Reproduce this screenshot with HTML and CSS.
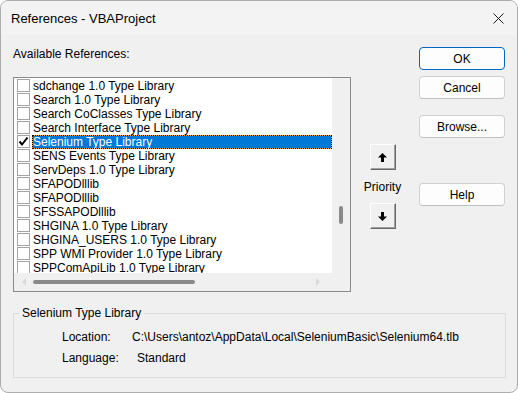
FILE: index.html
```html
<!DOCTYPE html>
<html lang="en">
<head>
  <meta charset="UTF-8">
  <title>References - VBAProject</title>
  <link rel="stylesheet" href="styles.css">
</head>
<body>
  <div class="window">
    <div class="titlebar">
      <span class="title">References - VBAProject</span>
      <svg class="close" width="11" height="11" viewBox="0 0 11 11">
        <path d="M0.5 0.5 L10.5 10.5 M10.5 0.5 L0.5 10.5" stroke="#1a1a1a" stroke-width="1" fill="none"/>
      </svg>
    </div>

    <div class="content">
      <div class="main">
        <div class="refs">
          <div class="label">Available References:</div>
          <div class="listbox">
            <div class="items">
              <div class="item"><span class="check"></span><span class="name">sdchange 1.0 Type Library</span></div>
              <div class="item"><span class="check"></span><span class="name">Search 1.0 Type Library</span></div>
              <div class="item"><span class="check"></span><span class="name">Search CoClasses Type Library</span></div>
              <div class="item"><span class="check"></span><span class="name">Search Interface Type Library</span></div>
              <div class="item selected">
                <span class="check">
                  <svg width="11" height="11" viewBox="0 0 11 11"><path d="M1.5 5.5 L4 8.5 L9.5 1.5" stroke="#000" stroke-width="2" fill="none"/></svg>
                </span><span class="name">Selenium Type Library</span>
              </div>
              <div class="item"><span class="check"></span><span class="name">SENS Events Type Library</span></div>
              <div class="item"><span class="check"></span><span class="name">ServDeps 1.0 Type Library</span></div>
              <div class="item"><span class="check"></span><span class="name">SFAPODlllib</span></div>
              <div class="item"><span class="check"></span><span class="name">SFAPODlllib</span></div>
              <div class="item"><span class="check"></span><span class="name">SFSSAPODlllib</span></div>
              <div class="item"><span class="check"></span><span class="name">SHGINA 1.0 Type Library</span></div>
              <div class="item"><span class="check"></span><span class="name">SHGINA_USERS 1.0 Type Library</span></div>
              <div class="item"><span class="check"></span><span class="name">SPP WMI Provider 1.0 Type Library</span></div>
              <div class="item"><span class="check"></span><span class="name">SPPComApiLib 1.0 Type Library</span></div>
            </div>
            <div class="vscroll"><div class="vthumb"></div></div>
            <div class="hscroll">
              <span class="arrow-left"></span>
              <div class="hthumb"></div>
              <span class="arrow-right"></span>
            </div>
            <div class="corner"></div>
          </div>
        </div>

        <div class="priority">
          <div class="arrow-btn">
            <svg width="9" height="9" viewBox="0 0 9 9"><polygon points="4.5,0 9,4.5 6,4.5 6,9 3,9 3,4.5 0,4.5" fill="#000"/></svg>
          </div>
          <div class="priority-label">Priority</div>
          <div class="arrow-btn">
            <svg width="9" height="9" viewBox="0 0 9 9"><polygon points="4.5,9 9,4.5 6,4.5 6,0 3,0 3,4.5 0,4.5" fill="#000"/></svg>
          </div>
        </div>

        <div class="buttons">
          <button class="btn default">OK</button>
          <button class="btn">Cancel</button>
          <button class="btn browse">Browse...</button>
          <button class="btn help">Help</button>
        </div>
      </div>

      <fieldset class="group">
        <legend>Selenium Type Library</legend>
        <div class="info">
          <div class="row"><span class="key">Location:</span><span class="value">C:\Users\antoz\AppData\Local\SeleniumBasic\Selenium64.tlb</span></div>
          <div class="row"><span class="key">Language:</span><span class="value lang">Standard</span></div>
        </div>
      </fieldset>
    </div>
  </div>
</body>
</html>
```

FILE: styles.css
```css
body {
  margin: 0;
  background: #fff;
  font-family: "Liberation Sans", Arial, sans-serif;
  font-size: 12px;
  color: #000;
}

.window {
  width: 518px;
  height: 393px;
  box-sizing: border-box;
  border: 1px solid #adadad;
  border-radius: 8px;
  background: #f0f0f0;
  overflow: hidden;
}

.titlebar {
  height: 34px;
  display: flex;
  align-items: center;
  justify-content: space-between;
  padding: 0 13px 0 10px;
  background: #f3f3f3;
}
.title {
  font-size: 13px;
}
.close {
  display: block;
}

.content {
  padding: 12px 12px 0 12px;
}

.main {
  display: flex;
}

/* left column */
.refs {
  width: 338px;
}
.label {
  line-height: 14px;
  margin-bottom: 16px;
}
.listbox {
  height: 215px;
  box-sizing: border-box;
  border: 1px solid #8a8a8a;
  display: grid;
  grid-template-columns: 1fr 18px;
  grid-template-rows: 1fr 18px;
  background: #fff;
}
.items {
  overflow: hidden;
  padding-top: 1px;
}
.item {
  height: 14px;
  display: flex;
  align-items: center;
  padding-left: 3px;
  line-height: 14px;
  white-space: nowrap;
}
.check {
  width: 13px;
  height: 13px;
  box-sizing: border-box;
  border: 1px solid #a3a3a3;
  background: #fff;
  flex: none;
  margin-bottom: 1px;
  display: flex;
  align-items: center;
  justify-content: center;
}
.name {
  margin-left: 2px;
  padding-left: 1px;
  flex: 1;
  height: 14px;
  box-sizing: border-box;
}
.selected .name {
  background: #0078d7;
  color: #fff;
  border: 1px solid #f0a040;
  outline: 1px dotted #000;
  outline-offset: -1px;
  line-height: 12px;
  padding-left: 0;
}

.vscroll {
  background: #f0f0f0;
  display: flex;
  justify-content: center;
}
.vthumb {
  width: 4px;
  height: 18px;
  margin-top: 128px;
  border-radius: 2px;
  background: #8a8a8a;
}
.hscroll {
  background: #f0f0f0;
  display: flex;
  align-items: center;
  padding-left: 8px;
}
.arrow-left {
  width: 0;
  height: 0;
  border-top: 4px solid transparent;
  border-bottom: 4px solid transparent;
  border-right: 4px solid #dadada;
}
.hthumb {
  width: 162px;
  height: 4px;
  margin-left: 7px;
  border-radius: 2px;
  background: #8a8a8a;
}
.arrow-right {
  width: 0;
  height: 0;
  margin-left: 121px;
  border-top: 4px solid transparent;
  border-bottom: 4px solid transparent;
  border-left: 4px solid #dadada;
}
.corner {
  background: #f0f0f0;
}

/* priority arrows */
.priority {
  width: 41px;
  margin-left: 11px;
  padding-top: 97px;
  display: flex;
  flex-direction: column;
  align-items: center;
}
.arrow-btn {
  width: 26px;
  height: 26px;
  box-sizing: border-box;
  background: #f0f0f0;
  border: 1px solid;
  border-color: #fff #696969 #696969 #fff;
  box-shadow: inset -1px -1px 0 #a0a0a0;
  display: flex;
  align-items: center;
  justify-content: center;
}
.priority-label {
  line-height: 14px;
  margin: 10px 0 9px;
}

/* dialog buttons */
.buttons {
  margin-left: 16px;
  width: 86px;
  display: flex;
  flex-direction: column;
  gap: 6px;
}
.btn {
  height: 23px;
  padding: 0;
  font-family: "Liberation Sans", Arial, sans-serif;
  font-size: 12px;
  color: #000;
  background: #fdfdfd;
  border: 1px solid #d0d0d0;
  border-bottom-color: #c0c0c0;
  border-radius: 4px;
}
.btn.default {
  border-color: #0067c0;
}
.btn.browse {
  margin-top: 10px;
}
.btn.help {
  margin-top: 39px;
}

/* info group */
.group {
  margin: 14px 0 0 0;
  padding: 0 0 0 5px;
  width: 493px;
  box-sizing: border-box;
  border: 1px solid #dcdcdc;
  min-width: 0;
}
.group legend {
  padding: 0 3px;
  line-height: 14px;
}
.info {
  padding: 10px 0 12px 43px;
  display: flex;
  flex-direction: column;
  gap: 7px;
}
.row {
  display: flex;
  line-height: 14px;
}
.key {
  width: 70px;
}
.lang {
  margin-left: 5px;
}
```
